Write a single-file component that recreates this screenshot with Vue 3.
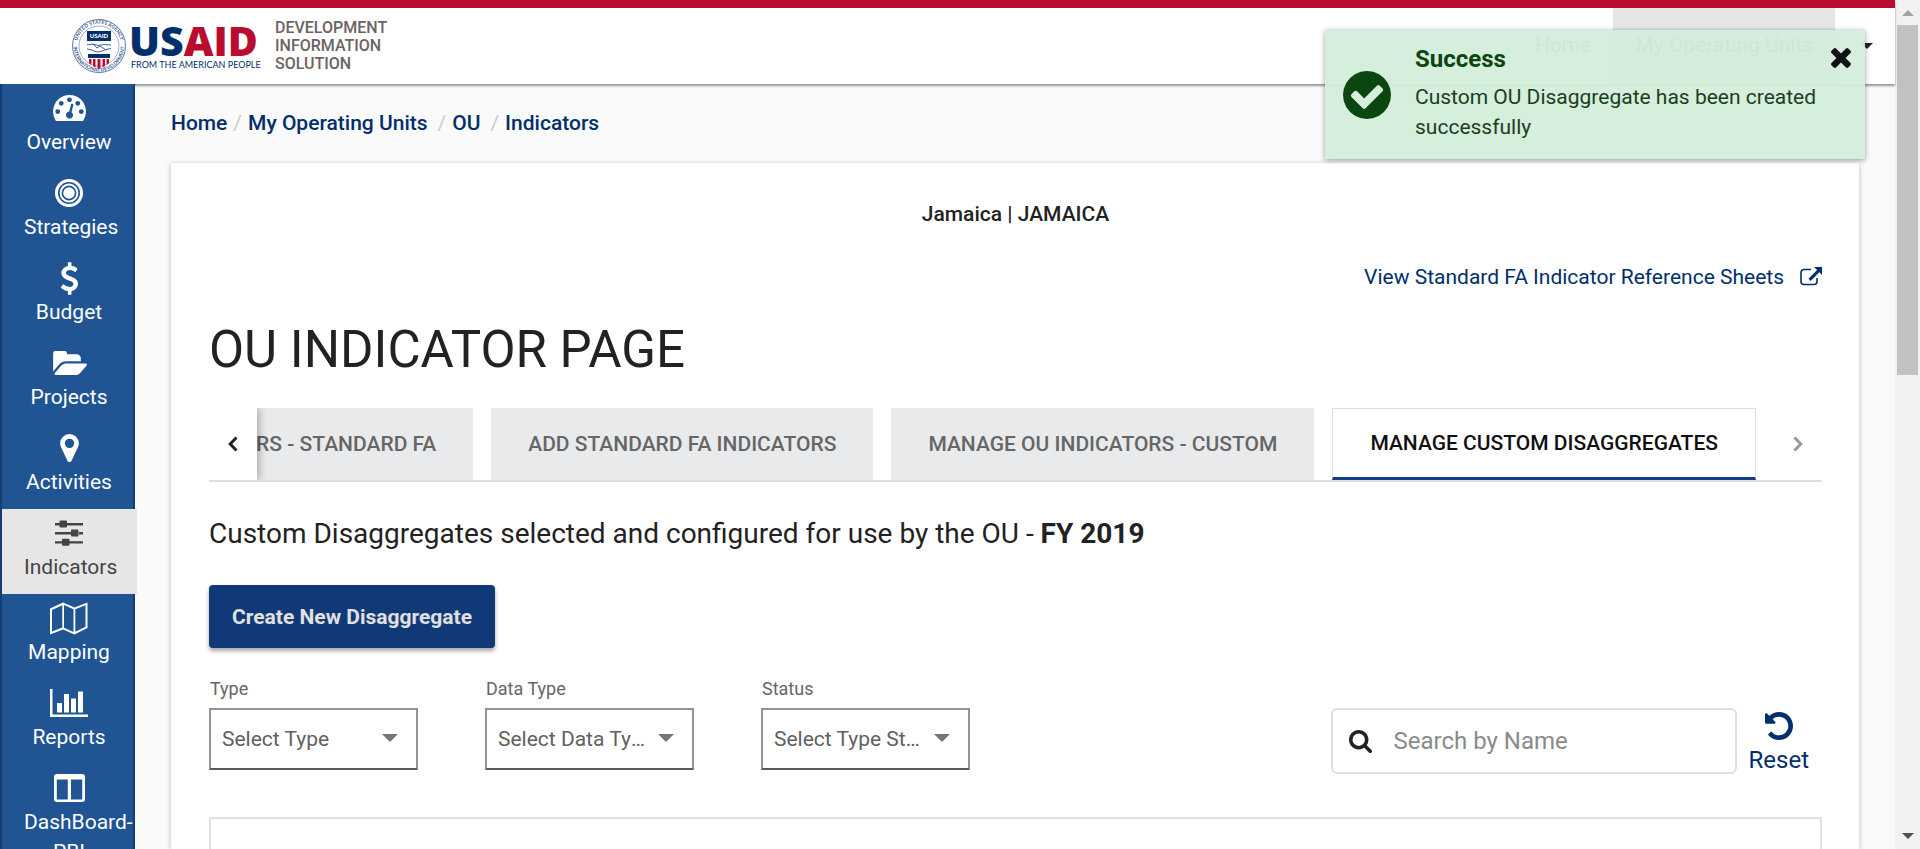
<script setup>
import { ref } from 'vue'

const icons = {
  gauge: { box: '0 256 1792 1408', w: 33, h: 26, d: 'M384 1152q0-53-37.5-90.5t-90.5-37.5-90.5 37.5-37.5 90.5 37.5 90.5 90.5 37.5 90.5-37.5 37.5-90.5zm192-448q0-53-37.5-90.5t-90.5-37.5-90.5 37.5-37.5 90.5 37.5 90.5 90.5 37.5 90.5-37.5 37.5-90.5zm428 481l101-382q6-26-7.5-48.5t-38.5-29.5-48 6.5-30 39.5l-101 382q-60 5-107 43.5t-63 98.5q-20 77 20 146t117 89 146-20 89-117q16-60-6-117t-72-91zm660-33q0-53-37.5-90.5t-90.5-37.5-90.5 37.5-37.5 90.5 37.5 90.5 90.5 37.5 90.5-37.5 37.5-90.5zm-640-640q0-53-37.5-90.5t-90.5-37.5-90.5 37.5-37.5 90.5 37.5 90.5 90.5 37.5 90.5-37.5 37.5-90.5zm448 192q0-53-37.5-90.5t-90.5-37.5-90.5 37.5-37.5 90.5 37.5 90.5 90.5 37.5 90.5-37.5 37.5-90.5zm320 448q0 261-141 483-19 29-54 29h-1402q-35 0-54-29-141-221-141-483 0-182 71-348t191-286 286-191 348-71 348 71 286 191 191 286 71 348z' },
  target: { box: '0 0 28 28', w: 28, h: 28, d: 'M14 0a14 14 0 1 0 0 28a14 14 0 1 0 0-28zm0 3a11 11 0 1 1 0 22a11 11 0 1 1 0-22zM14 4.600a9.400 9.400 0 1 0 0 18.800a9.400 9.400 0 1 0 0-18.800zm0 2a7.400 7.400 0 1 1 0 14.800a7.400 7.400 0 1 1 0-14.800zM14 8.200a5.800 5.800 0 1 0 0 11.600a5.800 5.800 0 1 0 0-11.600z' },
  dollar: { box: '430 0 932 1792', w: 17, h: 33, d: 'M1362 1185q0 153-99.5 263.500t-258.500 136.500v175q0 14-9 23t-23 9h-135q-13 0-22.500-9.500t-9.500-22.500v-175q-66-9-127.500-31t-101.500-44.500-74-48-46.500-37.500-17.500-18q-17-21-2-41l103-135q7-10 23-12 15-2 24 9l2 2q113 99 243 125 37 8 74 8 81 0 142.500-43t61.500-122q0-28-15-53t-33.500-42-58.500-37.500-66-32-80-32.500q-39-16-61.500-25t-61.500-26.500-62.500-31-56.500-35.500-53.500-42.500-43.500-49-35.500-58-21-66.500-8.500-78q0-138 98-242t255-134v-180q0-13 9.500-22.500t22.500-9.500h135q14 0 23 9t9 23v176q57 6 110.500 23t87 33.500 63.500 37.500 39 29 15 14q17 18 5 38l-81 146q-8 15-23 16-14 3-27-7-3-3-14.500-12t-39-26.500-58.500-32-74.500-26-85.500-11.500q-95 0-155 43t-60 111q0 26 8.500 48t29.500 41.500 39.500 33 56 31 60.500 27 70 27.500q53 20 81 31.500t76 35 75.500 42.500 62 50 53 63.500 31.500 76.500 13 94z' },
  folder: { box: '0 256 1943 1280', w: 35, h: 25, d: 'M1943 952q0 31-31 66l-336 396q-43 51-120.5 86.5t-143.5 35.5h-1088q-34 0-60.5-13t-26.5-43q0-31 31-66l336-396q43-51 120.5-86.5t143.5-35.5h1088q34 0 60.5 13t26.5 43zm-343-344v160h-832q-94 0-197 47.5t-164 119.5l-337 396-5 6q0-4-.5-12.5t-.5-12.5v-960q0-92 66-158t158-66h320q92 0 158 66t66 158v32h544q92 0 158 66t66 158z' },
  pin: { box: '384 128 1024 1536', w: 19, h: 28, d: 'M1152 640q0-106-75-181t-181-75-181 75-75 181 75 181 181 75 181-75 75-181zm256 0q0 109-33 179l-364 774q-16 33-47.5 52t-67.5 19-67.5-19-46.5-52l-365-774q-33-70-33-179 0-212 150-362t362-150 362 150 150 362z' },
  sliders: { box: '0 0 28 26', w: 28, h: 26, d: 'M0 3h4.500v2.400H0zM12 3h16v2.400H12zM5.500 .500h5.500a1 1 0 0 1 1 1v5a1 1 0 0 1-1 1H5.500a1 1 0 0 1-1-1v-5a1 1 0 0 1 1-1zM0 12h16v2.400H0zM24 12h4v2.400h-4zM17 9.500h5.500a1 1 0 0 1 1 1v5a1 1 0 0 1-1 1H17a1 1 0 0 1-1-1v-5a1 1 0 0 1 1-1zM0 21.200h7v2.400H0zM14.500 21.200H28v2.400H14.500zM8 18.700h5.500a1 1 0 0 1 1 1v5a1 1 0 0 1-1 1H8a1 1 0 0 1-1-1v-5a1 1 0 0 1 1-1z' },
  map: { box: '0 0 38 33', w: 38, h: 33, d: 'M0 6.500L13 .500l11.500 5L37.500 .500V26l-13 6.500L13 27.500L0 32.500zM2 8v21.500L12.300 25.600V3.200zM14 3v22.800l9.500 4.200V7.200zM25.300 7.200v22.500L35.500 24.800V3.300z' },
  chart: { box: '0 0 38 28', w: 38, h: 28, d: 'M0 0h2.500v25.500H38V28H0zM7 14h5v9.500H7zM14 5h5v18.500h-5zM21 9.500h5v14h-5zM28 2.500h5v21h-5z' },
  columns: { box: '0 0 31 28', w: 31, h: 28, d: 'M3 0h25a3 3 0 0 1 3 3v22a3 3 0 0 1-3 3H3a3 3 0 0 1-3-3V3a3 3 0 0 1 3-3zM2.800 5.500v20h11v-20zM17 5.500v20h11.200v-20z' },
}

const menu = [
  { label: 'Overview', icon: 'gauge' },
  { label: 'Strategies', icon: 'target' },
  { label: 'Budget', icon: 'dollar' },
  { label: 'Projects', icon: 'folder' },
  { label: 'Activities', icon: 'pin' },
  { label: 'Indicators', icon: 'sliders' },
  { label: 'Mapping', icon: 'map' },
  { label: 'Reports', icon: 'chart' },
  { label: 'DashBoard-PBI', icon: 'columns' },
]
const activeMenu = ref('Indicators')

const crumbs = ['Home', 'My Operating Units', 'OU', 'Indicators']

const tabs = [
  'MANAGE OU INDICATORS - STANDARD FA',
  'ADD STANDARD FA INDICATORS',
  'MANAGE OU INDICATORS - CUSTOM',
  'MANAGE CUSTOM DISAGGREGATES',
]
const activeTab = ref(3)

const filters = [
  { id: 'type', label: 'Type', placeholder: 'Select Type' },
  { id: 'data-type', label: 'Data Type', placeholder: 'Select Data Type' },
  { id: 'status', label: 'Status', placeholder: 'Select Type Status' },
]
const search = ref('')
const toastOpen = ref(true)
</script>

<template>
  <div class="window">
    <div class="app">
      <header class="header">
        <a class="brand" href="#">
          <svg class="logo" viewBox="0 0 188 56" role="img" aria-label="USAID">
            <defs>
              <path id="seal-top" d="M5.800 28a22.200 22.200 0 0 1 44.400 0" />
              <path id="seal-bottom" d="M2.600 28a25.400 25.400 0 0 0 50.800 0" />
            </defs>
            <g fill="none" stroke="#5d7ba8">
              <circle cx="28" cy="28" r="26.500" stroke-width="1" />
              <circle cx="28" cy="28" r="20" stroke-width="1" stroke-opacity="0.6" />
            </g>
            <g class="seal-text">
              <text><textPath href="#seal-top" startOffset="50%" text-anchor="middle">UNITED STATES AGENCY</textPath></text>
              <text><textPath href="#seal-bottom" startOffset="50%" text-anchor="middle">INTERNATIONAL DEVELOPMENT</textPath></text>
            </g>
            <rect x="16" y="13" width="24" height="10" fill="#002f6c" />
            <text class="seal-name" x="28" y="20" text-anchor="middle">USAID</text>
            <path d="M16 27l6-1 5 1.500 6-1 7 .500M16 31l5 1 5 2 4-.500 5-2 5-1M22 26l4 4 3-2 6 4" fill="none" stroke="#3f6196" stroke-width="1" />
            <rect x="17" y="36" width="22" height="4" fill="#002f6c" />
            <path d="M18 41h2.500v6L18 45zM22 41h2.500v8.500L22 48zM26.500 41h3v9.500l-1.500 .500-1.500-.500zM31.500 41H34v7l-2.500 1.500zM35.500 41H38v4l-2.500 2z" fill="#ba0c2f" />
            <text class="word" x="58" y="38"><tspan fill="#002f6c">US</tspan><tspan fill="#ba0c2f">AID</tspan></text>
            <text class="tagline" x="60" y="50">FROM THE AMERICAN PEOPLE</text>
          </svg>
          <span class="product">DEVELOPMENT<br>INFORMATION<br>SOLUTION</span>
        </a>
        <nav class="topnav" aria-label="Main">
          <a href="#">Home</a>
          <a href="#" class="current">My Operating Units</a>
          <button class="more" aria-label="More"></button>
        </nav>
      </header>

      <div class="body">
        <nav class="sidebar" aria-label="Sections">
          <a v-for="m in menu" :key="m.label" href="#" class="item"
             :class="{ active: m.label === activeMenu }" @click.prevent="activeMenu = m.label">
            <span class="glyph">
              <svg :viewBox="icons[m.icon].box" :width="icons[m.icon].w" :height="icons[m.icon].h" aria-hidden="true">
                <path :d="icons[m.icon].d" fill="currentColor" fill-rule="evenodd" />
              </svg>
            </span>
            <span class="label">{{ m.label }}</span>
          </a>
        </nav>

        <main class="main">
          <nav class="crumbs" aria-label="Breadcrumb">
            <template v-for="(c, i) in crumbs" :key="c">
              <span v-if="i" class="slash">/</span>
              <a href="#">{{ c }}</a>
            </template>
          </nav>

          <section class="card">
            <p class="unit">Jamaica | JAMAICA</p>
            <a class="sheets" href="#">
              View Standard FA Indicator Reference Sheets
              <svg viewBox="0 0 22 20" width="22" height="20" aria-hidden="true">
                <path d="M11 2.500H4A3 3 0 0 0 1 5.500v9A3 3 0 0 0 4 17.500h10a3 3 0 0 0 3-3V11" fill="none" stroke="currentColor" stroke-width="1.600" />
                <path d="M14 0h8v8l-2.700-2.700-8.600 8.600-2.200-2.200 8.600-8.600z" fill="currentColor" />
              </svg>
            </a>
            <h1>OU INDICATOR PAGE</h1>

            <div class="tabbar">
              <button class="pager prev" aria-label="Previous tabs">
                <svg viewBox="0 0 10 16" width="10" height="16"><path d="M8.500 1.500L2.200 8l6.300 6.500" /></svg>
              </button>
              <div class="tabs" role="tablist">
                <button v-for="(t, i) in tabs" :key="t" role="tab" class="tab"
                        :class="{ on: i === activeTab }" :aria-selected="i === activeTab" @click="activeTab = i">{{ t }}</button>
              </div>
              <button class="pager next" aria-label="Next tabs">
                <svg viewBox="0 0 10 16" width="10" height="16"><path d="M1.500 1.500L7.800 8l-6.300 6.500" /></svg>
              </button>
            </div>

            <h2>Custom Disaggregates selected and configured for use by the OU - <strong>FY 2019</strong></h2>
            <button class="create">Create New Disaggregate</button>

            <div class="tools">
              <div v-for="f in filters" :key="f.id" class="filter">
                <label :for="f.id">{{ f.label }}</label>
                <div class="select">
                  <select :id="f.id"><option>{{ f.placeholder }}</option></select>
                  <svg viewBox="0 0 16 8" width="16" height="8" aria-hidden="true"><path d="M0 0h16L8 8z" fill="#757575" /></svg>
                </div>
              </div>
              <label class="search">
                <svg viewBox="64 128 1664 1664" width="23" height="23" aria-hidden="true"><path fill="#222" d="M1216 832q0-185-131.5-316.5t-316.5-131.5-316.5 131.5-131.5 316.5 131.5 316.5 316.5 131.5 316.5-131.5 131.5-316.5zm512 832q0 52-38 90t-90 38q-54 0-90-38l-343-342q-179 124-399 124-143 0-273.5-55.5t-225-150-150-225-55.5-273.5 55.5-273.5 150-225 225-150 273.5-55.5 273.5 55.5 225 150 150 225 55.5 273.5q0 220-124 399l343 343q37 37 37 90z" /></svg>
                <input v-model="search" type="text" placeholder="Search by Name" aria-label="Search by Name">
              </label>
              <button class="reset" @click="search = ''">
                <svg viewBox="128 128 1536 1536" width="28" height="28" aria-hidden="true"><path fill="currentColor" d="M1664 896q0 156-61 298t-164 245-245 164-298 61q-172 0-327-72.5t-264-204.5q-7-10-6.500-22.500t8.500-20.500l137-138q10-9 25-9 16 2 23 12 73 95 179 147t225 52q104 0 198.500-40.500t163.500-109.500 109.500-163.500 40.500-198.500-40.500-198.500-109.500-163.500-163.500-109.500-198.500-40.500q-98 0-188 35.500t-160 101.500l137 138q31 30 14 69-17 40-59 40h-448q-26 0-45-19t-19-45v-448q0-42 40-59 39-17 69 14l130 129q107-101 244.500-156.500t284.500-55.500q156 0 298 61t245 164 164 245 61 298z" /></svg>
                Reset
              </button>
            </div>

            <div class="panel"></div>
          </section>
        </main>
      </div>

      <div v-if="toastOpen" class="toast" role="alert">
        <svg class="check" viewBox="128 128 1536 1536" width="48" height="48" aria-hidden="true"><path fill="currentColor" d="M1412 734q0-28-18-46l-91-90q-19-19-45-19t-45 19l-408 407-226-226q-19-19-45-19t-45 19l-91 90q-18 18-18 46 0 27 18 45l362 362q19 19 45 19 27 0 46-19l543-543q18-18 18-45zm252 162q0 209-103 385.5t-279.5 279.5-385.5 103-385.5-103-279.5-279.5-103-385.5 103-385.500 279.500-279.500 385.500-103 385.500 103 279.500 279.500 103 385.500z" /></svg>
        <div class="message">
          <strong>Success</strong>
          <p>Custom OU Disaggregate has been created successfully</p>
        </div>
        <button class="close" aria-label="Close" @click="toastOpen = false">
          <svg viewBox="302 366 1188 1188" width="20" height="20"><path fill="currentColor" d="M1490 1322q0 40-28 68l-136 136q-28 28-68 28t-68-28l-294-294-294 294q-28 28-68 28t-68-28l-136-136q-28-28-28-68t28-68l294-294-294-294q-28-28-28-68t28-68l136-136q28-28 68-28t68 28l294 294 294-294q28-28 68-28t68 28l136 136q28 28 28 68t-28 68l-294 294 294 294q28 28 28 68z" /></svg>
        </button>
      </div>
    </div>

    <div class="scrollbar" aria-hidden="true">
      <svg viewBox="0 0 12 6" width="12" height="6"><path d="M0 6h12L6 0z" fill="#a3a3a3" /></svg>
      <div class="thumb"></div>
      <svg viewBox="0 0 12 6" width="12" height="6"><path d="M0 0h12L6 6z" fill="#505050" /></svg>
    </div>
  </div>
</template>

<style>
body {
  margin: 0;
  overflow: hidden;
}
</style>

<style scoped>
* {
  box-sizing: border-box;
}
.window {
  display: flex;
  height: 100vh;
  overflow: hidden;
  font: 21px/24px Roboto, "Liberation Sans", sans-serif;
  color: #222;
  background: #fafafa;
}
button {
  font: inherit;
  color: inherit;
  border: 0;
  padding: 0;
  background: none;
  cursor: pointer;
}
a {
  color: inherit;
  text-decoration: none;
}
p, h1, h2 {
  margin: 0;
}
svg {
  display: block;
  flex: none;
}
.app {
  position: relative;
  flex: 1;
  min-width: 0;
  display: flex;
  flex-direction: column;
}

.header {
  flex: none;
  display: flex;
  justify-content: space-between;
  height: 84px;
  border-top: 8px solid #ba0c2f;
  background: #fff;
  box-shadow: 0 2px 2px rgba(0, 0, 0, 0.4);
}
.brand {
  display: flex;
  align-items: center;
  gap: 16px;
  padding-left: 71px;
}
.logo {
  width: 188px;
  height: 56px;
  overflow: visible;
}
.word {
  font: 800 41px "Open Sans", sans-serif;
}
.tagline {
  font: 400 9px Lato, sans-serif;
  fill: #002f6c;
}
.seal-text {
  font: 700 5px Lato, sans-serif;
  fill: #3f6196;
}
.seal-name {
  font: 900 6px Lato, sans-serif;
  fill: #fff;
}
.product {
  font-size: 16px;
  line-height: 18px;
  font-weight: 500;
  color: #6c6463;
}
.topnav {
  display: flex;
  padding-right: 22px;
  color: #6c6c6c;
}
.topnav a {
  padding: 25px 22px 0;
}
.topnav .current {
  background: #e6e6e6;
}
.more {
  align-self: flex-start;
  margin: 35px 0 0 26px;
  border: 6px solid transparent;
  border-top-color: #222;
  border-bottom: 0;
}

.body {
  flex: 1;
  min-height: 0;
  display: flex;
}
.sidebar {
  position: relative;
  flex: none;
  width: 135px;
  border: solid #163d70;
  border-width: 0 2px;
  background: #205493;
  color: #fff;
}
.item {
  display: block;
  height: 85px;
  padding: 7px 19px 0 22px;
}
.item.active {
  width: 135px;
  padding-right: 23px;
  background: #e6e6e6;
  color: #444;
}
.glyph {
  display: flex;
  align-items: center;
  justify-content: center;
  height: 34px;
}
.label {
  display: block;
  margin-top: 2px;
  line-height: 30px;
  text-align: center;
}

.main {
  flex: 1;
  min-width: 0;
  display: flex;
  flex-direction: column;
  padding: 0 36px;
}
.crumbs {
  display: flex;
  gap: 6px;
  padding: 27px 0 28px;
  font-weight: 500;
  color: #002f6c;
}
.crumbs a:not(:first-child) {
  padding-right: 4px;
}
.slash {
  color: #ccc;
  font-weight: 400;
}
.card {
  flex: 1;
  min-height: 0;
  display: flex;
  flex-direction: column;
  align-items: stretch;
  padding: 39px 37px 0 38px;
  background: #fff;
  box-shadow: 0 1px 5px rgba(0, 0, 0, 0.25);
}
.unit {
  text-align: center;
  font-weight: 500;
}
.sheets {
  align-self: flex-end;
  display: flex;
  align-items: center;
  gap: 16px;
  margin-top: 39px;
  color: #002f6c;
}
h1 {
  margin-top: 31px;
  font-size: 51px;
  line-height: 60px;
  font-weight: 400;
}
.tabbar {
  flex: none;
  display: flex;
  height: 74px;
  margin-top: 28px;
  border-bottom: 2px solid #dedfe0;
}
.pager {
  flex: none;
  display: flex;
  align-items: center;
  justify-content: center;
  width: 48px;
}
.pager path {
  fill: none;
  stroke: currentColor;
  stroke-width: 3;
}
.prev {
  z-index: 1;
  box-shadow: 2px 0 8px rgba(0, 0, 0, 0.3);
  clip-path: inset(0 -12px 0 0);
}
.next {
  color: #999;
}
.tabs {
  flex: 1;
  min-width: 0;
  display: flex;
  justify-content: flex-end;
  gap: 18px;
  padding-right: 18px;
  overflow: hidden;
}
.tab {
  flex: none;
  padding: 0 37px;
  font-weight: 500;
  color: #666;
  background: #e9eaeb;
  white-space: nowrap;
}
.tab.on {
  border: 1px solid #dedfe0;
  border-bottom: 3px solid #123f85;
  background: #fff;
  color: #111;
}
h2 {
  margin-top: 36px;
  font-size: 28px;
  line-height: 32px;
  font-weight: 400;
}
.create {
  align-self: flex-start;
  height: 63px;
  margin-top: 35px;
  padding: 0 23px;
  border-radius: 4px;
  background: #113978;
  box-shadow: 0 3px 4px rgba(0, 0, 0, 0.35);
  color: #e0e0e0;
  font-weight: 700;
}
.tools {
  display: flex;
  align-items: flex-end;
  margin-top: 29px;
}
.filter {
  width: 209px;
  margin-right: 67px;
  padding-bottom: 4px;
}
.filter label {
  display: block;
  margin-bottom: 7px;
  padding-left: 1px;
  font-size: 18px;
  color: #666;
}
.select {
  position: relative;
}
.select select {
  display: block;
  width: 100%;
  height: 62px;
  padding: 0 46px 0 11px;
  border: 2px solid #949494;
  border-bottom-color: #595959;
  border-radius: 0;
  background: #fff;
  appearance: none;
  font: inherit;
  color: #616161;
  text-overflow: ellipsis;
}
.select svg {
  position: absolute;
  right: 20px;
  top: 26px;
  pointer-events: none;
}
.search {
  display: flex;
  align-items: center;
  gap: 22px;
  width: 406px;
  height: 66px;
  margin-left: auto;
  padding-left: 16px;
  border: 2px solid #e0e0e0;
  border-radius: 6px;
}
.search input {
  flex: 1;
  min-width: 0;
  border: 0;
  padding: 0;
  outline: 0;
  background: none;
  font: inherit;
  font-size: 24px;
}
.search input::placeholder {
  color: #8a8a8a;
}
.reset {
  display: flex;
  flex-direction: column;
  align-items: center;
  gap: 6px;
  margin: 0 13px 0 12px;
  font-size: 24px;
  line-height: 28px;
  color: #002f6c;
}
.panel {
  flex: 1;
  margin-top: 43px;
  border: 2px solid #e0e0e0;
  border-bottom: 0;
}

.toast {
  position: absolute;
  top: 30px;
  right: 30px;
  display: flex;
  align-items: flex-start;
  width: 540px;
  height: 129px;
  padding: 0 14px 0 18px;
  background: rgba(212, 237, 218, 0.95);
  box-shadow: 0 1px 5px rgba(0, 0, 0, 0.4);
  color: #0b450f;
}
.check {
  align-self: center;
}
.message {
  flex: 1;
  min-width: 0;
  padding: 14px 0 0 24px;
}
.message strong {
  display: block;
  font-size: 24px;
  line-height: 30px;
  font-weight: 700;
}
.message p {
  margin-top: 8px;
  line-height: 30px;
  color: #193f1d;
}
.close {
  margin-top: 18px;
  color: #111;
}

.scrollbar {
  flex: none;
  display: flex;
  flex-direction: column;
  align-items: center;
  width: 25px;
  padding: 10px 2px;
  background: #f1f1f1;
}
.thumb {
  width: 100%;
  height: 350px;
  margin: 9px 0 auto;
  background: #c1c1c1;
}
</style>
